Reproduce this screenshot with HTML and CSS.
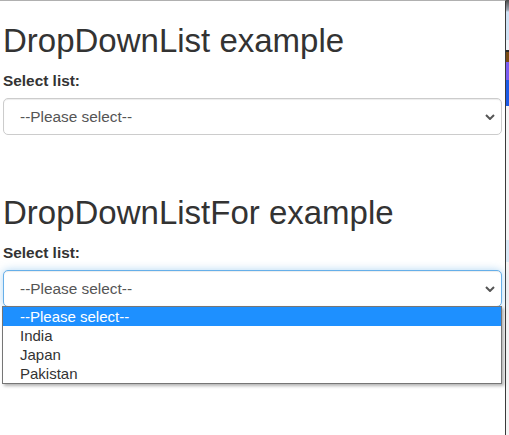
FILE: index.html
```html
<!DOCTYPE html>
<html lang="en">
<head>
    <meta charset="UTF-8">
    <title>DropDownList example</title>
    <link rel="stylesheet" href="styles.css">
</head>
<body>
    <div class="window">
        <h2>DropDownList example</h2>
        <div class="form-group">
            <label for="list1">Select list:</label>
            <div class="select-wrap">
                <select id="list1" class="form-control">
                    <option>--Please select--</option>
                    <option>India</option>
                    <option>Japan</option>
                    <option>Pakistan</option>
                </select>
                <svg class="chevron" width="10" height="6" viewBox="0 0 10 6"><path d="M1 1 L5 5 L9 1" fill="none" stroke="#555" stroke-width="2"/></svg>
            </div>
        </div>

        <h2 class="second">DropDownListFor example</h2>
        <div class="form-group">
            <label for="list2">Select list:</label>
            <div class="select-wrap">
                <select id="list2" class="form-control focused">
                    <option>--Please select--</option>
                    <option>India</option>
                    <option>Japan</option>
                    <option>Pakistan</option>
                </select>
                <svg class="chevron" width="10" height="6" viewBox="0 0 10 6"><path d="M1 1 L5 5 L9 1" fill="none" stroke="#555" stroke-width="2"/></svg>

                <!-- lista aberta -->
                <ul class="dropdown-list">
                    <li class="active">--Please select--</li>
                    <li>India</li>
                    <li>Japan</li>
                    <li>Pakistan</li>
                </ul>
            </div>
        </div>
    </div>
    <div class="desktop"></div>
</body>
</html>
```
FILE: styles.css
```css
/* Corpo */
body {
    margin: 0;
    height: 100vh;
    display: flex;
    font-family: "Liberation Sans", Arial, sans-serif;
    color: #333;
    background-color: #fff;
    overflow: hidden;
}

/* Janela do navegador */
.window {
    width: 499px;
    padding: 0 3px;
    border-top: 1px solid #b0b0b0;
    border-right: 1px solid #3a3a3a;
    flex-shrink: 0;
}

/* Faixa da área de trabalho */
.desktop {
    flex: 1;
    background: linear-gradient(to bottom,
        #4a4a4a 0, #9aa4b0 10px, #cfe2f5 12px, #cfe2f5 40px,
        #eef3f8 40px, #eef3f8 50px, #2a2a2a 50px, #2a2a2a 52px,
        #7a4b12 52px, #7a4b12 62px, #7a5cf2 62px, #7a5cf2 80px,
        #1c5ae6 80px, #1c5ae6 106px, #f4f4f4 106px, #f4f4f4 240px,
        #d8e8f6 240px, #d8e8f6 262px, #f4f4f4 262px);
}

/* Títulos */
h2 {
    font-size: 33px;
    font-weight: normal;
    line-height: 1.1;
    margin: 22px 0 11px;
    color: #333;
}

h2.second {
    margin-top: 60px;
}

.form-group {
    margin-bottom: 16px;
}

label {
    display: block;
    font-weight: bold;
    font-size: 15.4px;
    line-height: 22px;
    margin-bottom: 5.5px;
}

/* Select */
.select-wrap {
    position: relative;
}

.form-control {
    display: block;
    width: 100%;
    height: 37.4px;
    padding: 0 15px 0 16px;
    font-family: inherit;
    font-size: 15.4px;
    color: #555;
    background-color: #fff;
    border: 1px solid #ccc;
    border-radius: 5px;
    box-shadow: inset 0 1px 1px rgba(0, 0, 0, 0.075);
    -webkit-appearance: none;
    appearance: none;
    box-sizing: border-box;
}

.form-control.focused {
    border-color: #66afe9;
    box-shadow: inset 0 1px 1px rgba(0, 0, 0, 0.075), 0 0 8px rgba(102, 175, 233, 0.5);
}

.chevron {
    position: absolute;
    right: 7px;
    top: 16px;
    pointer-events: none;
}

/* Lista aberta */
.dropdown-list {
    position: absolute;
    left: -1px;
    right: 0;
    top: calc(100% - 1px);
    margin: 0;
    padding: 0;
    list-style: none;
    background-color: #fff;
    border: 1px solid #767676;
    box-shadow: 2px 2px 3px rgba(0, 0, 0, 0.3);
}

.dropdown-list li {
    height: 19px;
    line-height: 19px;
    padding-left: 17px;
    font-size: 15px;
    color: #333;
}

.dropdown-list li.active {
    background-color: #1e90ff;
    color: #fff;
}
```
